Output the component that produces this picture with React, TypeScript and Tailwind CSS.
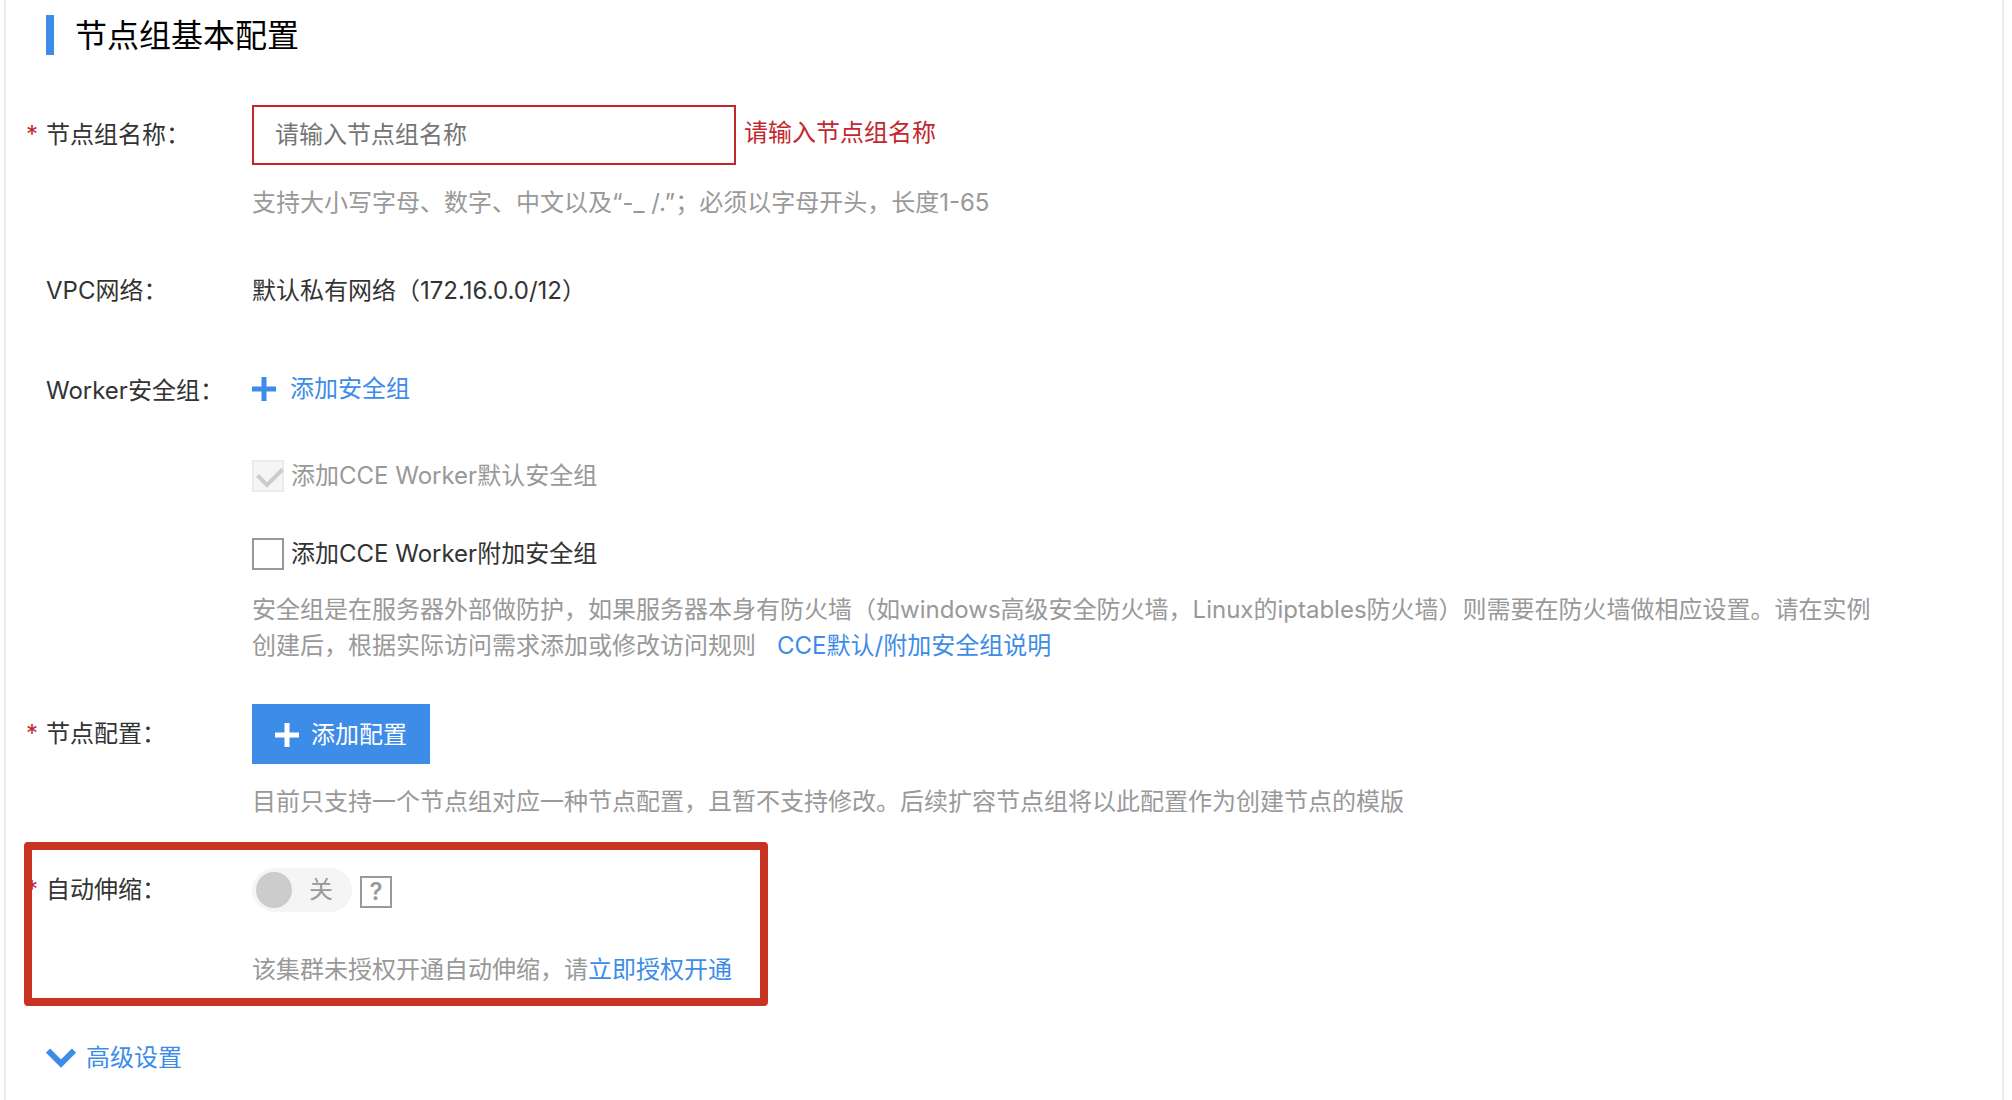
import type { ReactNode } from "react";
import { useState } from "react";

function PlusIcon() {
  return (
    <svg viewBox="0 0 24 24" className="size-6 shrink-0" aria-hidden="true">
      <path d="M9.5 0h5v9.5H24v5h-9.5V24h-5v-9.5H0v-5h9.5z" fill="currentColor" />
    </svg>
  );
}

function ChevronIcon() {
  return (
    <svg viewBox="0 0 30 20" className="h-5 w-[30px] shrink-0" aria-hidden="true">
      <path d="M2 2.5l13 13 13-13" fill="none" stroke="currentColor" strokeWidth="6" />
    </svg>
  );
}

function Row({
  label,
  htmlFor,
  required,
  className,
  labelClassName,
  children,
}: {
  label: string;
  htmlFor?: string;
  required?: boolean;
  className?: string;
  labelClassName?: string;
  children: ReactNode;
}) {
  return (
    <div className={`flex items-start ${className ?? ""}`}>
      <div className={`flex w-[226px] shrink-0 ${labelClassName ?? ""}`}>
        <span className="w-5 shrink-0 text-[#c1272d]">{required ? "*" : ""}</span>
        <label htmlFor={htmlFor}>{label}</label>
      </div>
      <div className="min-w-0 flex-1">{children}</div>
    </div>
  );
}

function Hint({ className, children }: { className?: string; children: ReactNode }) {
  return <p className={`text-[#999] ${className ?? ""}`}>{children}</p>;
}

function Checkbox({
  label,
  className,
  checked,
  disabled,
  onChange,
}: {
  label: string;
  className?: string;
  checked: boolean;
  disabled?: boolean;
  onChange?: (checked: boolean) => void;
}) {
  return (
    <label
      className={`flex w-fit items-center gap-[7px] ${disabled ? "text-[#999]" : ""} ${className ?? ""}`}
    >
      <span className="relative size-8">
        <input
          type="checkbox"
          checked={checked}
          disabled={disabled}
          onChange={(e) => onChange?.(e.target.checked)}
          className="block size-8 appearance-none border-2 border-[#999] bg-white disabled:border-[#ebebeb] disabled:bg-[#f5f5f5]"
        />
        {checked && (
          <svg
            viewBox="0 0 32 32"
            className="pointer-events-none absolute inset-0 size-8 text-[#ccc]"
            aria-hidden="true"
          >
            <path d="M5.5 15.5l9.5 9.5 15.500-15.500" fill="none" stroke="currentColor" strokeWidth="4" />
          </svg>
        )}
      </span>
      {label}
    </label>
  );
}

export default function App() {
  const [name, setName] = useState("");
  const [extraGroup, setExtraGroup] = useState(false);

  return (
    <main className="min-h-screen bg-white pr-2 pl-1 font-['Inter','Noto_Sans_CJK_SC',sans-serif] text-2xl leading-9 text-[#333]">
      <form
        className="min-h-screen border-x-2 border-[#ebebeb] pt-[15px] pb-5 pl-5"
        onSubmit={(e) => e.preventDefault()}
      >
        <div className="ml-5 flex h-10 items-center gap-[21px]">
          <span className="h-10 w-2 bg-[#3d8ce8]" />
          <h1 className="pt-0.5 text-[32px] leading-10 text-black">节点组基本配置</h1>
        </div>

        <Row
          label="节点组名称："
          htmlFor="group-name"
          required
          className="mt-[50px]"
          labelClassName="pt-3"
        >
          <div className="flex items-center gap-2">
            <input
              id="group-name"
              type="text"
              value={name}
              onChange={(e) => setName(e.target.value)}
              placeholder="请输入节点组名称"
              className="h-[60px] w-[484px] border-2 border-[#c1272d] px-[21px] pb-0.5 outline-none placeholder:text-[#757575]"
            />
            <span className="pb-1 text-[#c1272d]">请输入节点组名称</span>
          </div>
          <Hint className="mt-5">
            支持大小写字母、数字、中文以及“-_ /.”；必须以字母开头，长度1-65
          </Hint>
        </Row>

        <Row label="VPC网络：" className="mt-[52px]">
          默认私有网络（172.16.0.0/12）
        </Row>

        <Row label="Worker安全组：" className="mt-[62px]" labelClassName="pt-0.5">
          <button type="button" className="flex items-center gap-3.5 text-[#3d8ce8]">
            <PlusIcon />
            添加安全组
          </button>
          <Checkbox
            label="添加CCE Worker默认安全组"
            className="mt-[51px]"
            checked
            disabled
          />
          <Checkbox
            label="添加CCE Worker附加安全组"
            className="mt-[42px]"
            checked={extraGroup}
            onChange={setExtraGroup}
          />
          <Hint className="mt-5 pr-[120px]">
            安全组是在服务器外部做防护，如果服务器本身有防火墙（如windows高级安全防火墙，Linux的iptables防火墙）则需要在防火墙做相应设置。请在实例创建后，根据实际访问需求添加或修改访问规则
            <a href="#security-group" className="ml-[21px] text-[#3d8ce8]">
              CCE默认/附加安全组说明
            </a>
          </Hint>
        </Row>

        <Row label="节点配置：" required className="mt-10" labelClassName="pt-3">
          <button
            type="button"
            className="flex h-[60px] items-center gap-3 bg-[#3d8ce8] pt-0.5 pr-[23px] pl-[23px] text-white"
          >
            <PlusIcon />
            添加配置
          </button>
          <Hint className="mt-5">
            目前只支持一个节点组对应一种节点配置，且暂不支持修改。后续扩容节点组将以此配置作为创建节点的模版
          </Hint>
        </Row>

        <div className="relative mt-12">
          <Row label="自动伸缩：" htmlFor="auto-scale" required labelClassName="pt-1">
            <div className="flex items-center gap-2">
              <button
                id="auto-scale"
                type="button"
                role="switch"
                aria-checked="false"
                disabled
                className="flex h-11 w-[100px] items-center gap-[17px] rounded-full bg-[#f5f5f5] pl-1 text-[#999]"
              >
                <span className="size-9 rounded-full bg-[#ccc]" />
                关
              </button>
              <button
                type="button"
                aria-label="帮助"
                className="mt-1 flex size-8 items-center justify-center border-2 border-[#999] font-semibold text-[#999]"
              >
                ?
              </button>
            </div>
            <Hint className="mt-10">
              该集群未授权开通自动伸缩，请
              <a href="#authorize" className="text-[#3d8ce8]">
                立即授权开通
              </a>
            </Hint>
          </Row>
          {/* highlight frame */}
          <div className="pointer-events-none absolute -top-[26px] -bottom-[18px] -left-0.5 w-[744px] rounded-[4px] border-8 border-[#c93322]" />
        </div>

        <button
          type="button"
          className="mt-[52px] ml-5 flex items-center gap-2.5 text-[#3d8ce8]"
        >
          <ChevronIcon />
          高级设置
        </button>
      </form>
    </main>
  );
}
